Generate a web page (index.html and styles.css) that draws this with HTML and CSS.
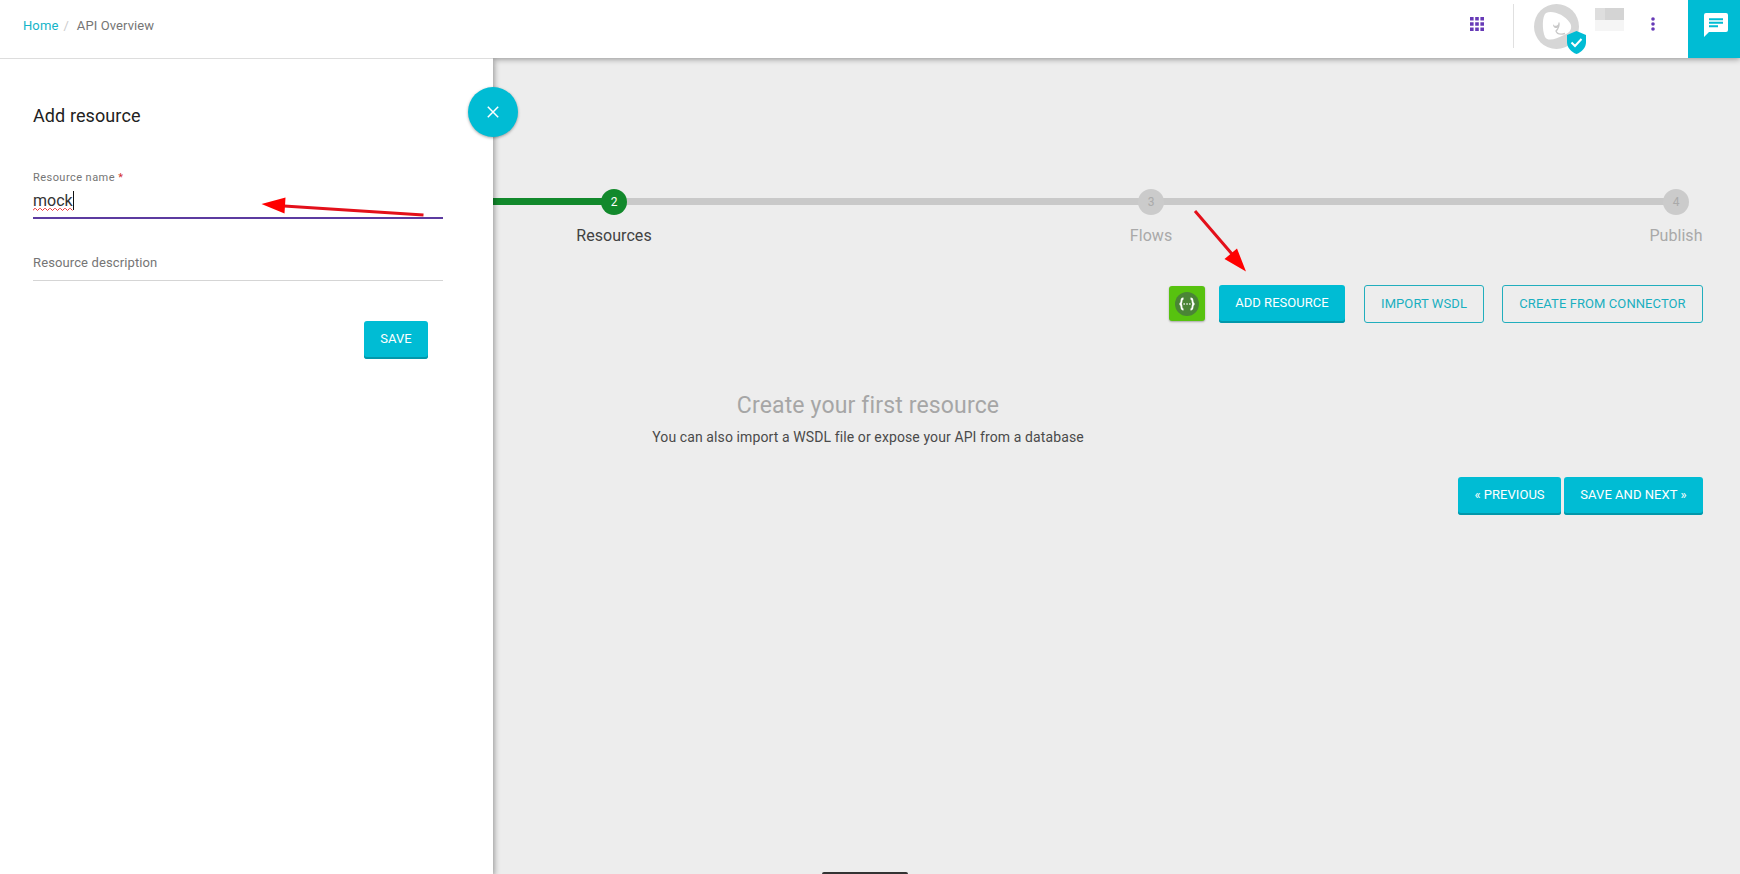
FILE: index.html
```html
<!DOCTYPE html>
<html lang="en">
<head>
<meta charset="utf-8">
<title>API Overview</title>
<link rel="stylesheet" href="styles.css">
</head>
<body>
<header class="topbar">
  <nav class="crumbs"><a class="home">Home</a><span class="slash">/</span><span class="current">API Overview</span></nav>
  <div class="tools">
    <svg class="apps" width="14" height="14" viewBox="0 0 14 14" fill="#673ab7"><path d="M0 0h3.6v3.6H0zM5.2 0h3.6v3.6H5.2zM10.4 0H14v3.6h-3.6zM0 5.2h3.6v3.6H0zM5.2 5.2h3.6v3.6H5.2zM10.4 5.2H14v3.6h-3.6zM0 10.4h3.6V14H0zM5.2 10.4h3.6V14H5.2zM10.4 10.4H14V14h-3.6z"/></svg>
    <span class="divider"></span>
    <div class="avatar">
      <svg width="45" height="45" viewBox="0 0 45 45"><circle cx="22.5" cy="22.5" r="22.5" fill="#d6d6d6"/><path d="M12 9C18 6 30 10 36 19C39 24 36 29 30 31C22 35 14 38 11 33C8 26 8 12 12 9Z" fill="#fff"/><path d="M25 18.500c.5 4-1.500 7-3 8.500c1 3 5 3.500 9 2.500" fill="none" stroke="#cacaca" stroke-width="1.300"/><path d="M19 20c1 2.500 4 2.500 6-.5c.5 4-1.500 5-3.500 4.500s-2.500-2-2.500-4Z" fill="#c8c8c8"/></svg>
      <svg class="badge" width="19" height="23" viewBox="0 0 19 23"><path d="M9.500 0L19 4v7c0 5.500-4 10-9.500 12C4 21 0 16.500 0 11V4Z" fill="#00bcd4"/><path d="M4.500 11.500l3.500 3.500 6.500-7" fill="none" stroke="#fff" stroke-width="2"/></svg>
    </div>
    <div class="masked"><i></i><i></i><i></i><i></i></div>
    <svg class="more" width="4" height="14" viewBox="0 0 4 14" fill="#673ab7"><circle cx="2" cy="2" r="1.8"/><circle cx="2" cy="7" r="1.8"/><circle cx="2" cy="12" r="1.8"/></svg>
    <div class="chat"><svg width="24" height="24" viewBox="0 0 24 24"><path d="M2 0h20a2 2 0 0 1 2 2v15a2 2 0 0 1-2 2H5l-5 5V2a2 2 0 0 1 2-2Z" fill="#fff"/><path d="M5 6.200h14M5 9.700h14M5 13.200h9" stroke="#00bcd4" stroke-width="1.900"/></svg></div>
  </div>
</header>
<main class="content">
  <div class="steps">
    <div class="step"><span class="dot done"></span></div>
    <div class="step"><span class="dot done">2</span><span class="name on">Resources</span></div>
    <div class="step"><span class="dot">3</span><span class="name">Flows</span></div>
    <div class="step"><span class="dot">4</span><span class="name">Publish</span></div>
  </div>
  <div class="actions">
    <span class="swagger"><svg width="24" height="24" viewBox="0 0 24 24"><circle cx="12" cy="12" r="12" fill="#4a8536"/><path d="M8.500 6.500C6.500 6.500 6.500 7.500 6.500 9S6.500 12 4.500 12C6.500 12 6.500 13.500 6.500 15s0 2.500 2 2.500M15.500 6.500c2 0 2 1 2 2.500s0 3 2 3c-2 0-2 1.500-2 3s0 2.500-2 2.500" fill="none" stroke="#fff" stroke-width="1.800"/><path d="M8.500 12h1.300M11.400 12h1.300M14.200 12h1.300" stroke="#fff" stroke-width="1.300"/></svg></span>
    <button class="btn add">ADD RESOURCE</button>
    <button class="btn outline import">IMPORT WSDL</button>
    <button class="btn outline connector">CREATE FROM CONNECTOR</button>
  </div>
  <section class="empty">
    <h2>Create your first resource</h2>
    <p>You can also import a WSDL file or expose your API from a database</p>
  </section>
  <div class="pager"><button class="btn prev">« PREVIOUS</button><button class="btn next">SAVE AND NEXT »</button></div>
</main>
<aside class="drawer">
  <h1>Add resource</h1>
  <div class="field active"><label>Resource name <b>*</b></label><div class="value"><span class="typed">mock<svg class="squiggle" width="40" height="3" viewBox="0 0 40 3"><path d="M0 2.500L1.500 .5H2.500L4.500 2.500L6.500 .5H7.500L9.500 2.500L11.500 .5H12.500L14.500 2.500L16.500 .5H17.500L19.500 2.500L21.500 .5H22.500L24.500 2.500L26.500 .5H27.500L29.500 2.500L31.500 .5H32.500L34.500 2.500L36.500 .5H37.500L39.500 2.500" fill="none" stroke="#e33" stroke-width="1"/></svg></span><span class="caret"></span></div></div>
  <div class="field desc">Resource description</div>
  <button class="btn save">SAVE</button>
  <button class="close" aria-label="Close"><svg width="12" height="12" viewBox="0 0 12 12"><path d="M.8.8l10.400 10.400M11.200.8L.8 11.200" stroke="#fff" stroke-width="1.500"/></svg></button>
</aside>
<svg class="arrows" width="1740" height="874" viewBox="0 0 1740 874"><path d="M423.500 215L284 206M1195 211L1232 254" stroke="#e3101a" stroke-width="3"/><path d="M261.500 204L285.500 197.500L284.500 213.500ZM1246 271.500L1237 248.500L1224.500 259Z" fill="#f00"/></svg>
<div class="handle"></div>
</body>
</html>
```

FILE: styles.css
```css
* { box-sizing: border-box; }
body { margin: 0; height: 874px; overflow: hidden; position: relative; display: flex; flex-direction: column; background: #ededed; font-family: Roboto, sans-serif; color: #212121; }
h1, h2, p { margin: 0; font-weight: 400; }
.topbar { position: relative; z-index: 1; flex: none; height: 58px; display: flex; justify-content: space-between; background: #fff; box-shadow: 0 1px 6px rgba(0,0,0,.4); }
.crumbs { display: flex; padding: 17px 0 0 23px; font-size: 13px; line-height: 18px; letter-spacing: .1px; }
.home { color: #15b4c8; }
.slash { margin: 0 8px 0 5px; color: #ccc; }
.current { color: #757575; }
.tools { display: flex; align-items: flex-start; }
.apps { margin-top: 17px; }
.divider { width: 1px; height: 44px; margin: 4px 20px 0 29px; background: #e0e0e0; }
.avatar { position: relative; width: 45px; height: 45px; margin-top: 4px; }
.badge { position: absolute; left: 33px; top: 27px; }
.masked { display: grid; grid-template-columns: 10px 19px; grid-template-rows: 12px 11px; margin: 8px 27px 0 16px; }
.masked i { background: #d4d4d4; }
.masked i:first-child { background: #dedede; }
.masked i:nth-child(n+3) { background: #f5f5f5; }
.more { margin: 17px 33px 0 0; }
.chat { width: 52px; height: 58px; padding: 13px 0 0 16px; background: #00bcd4; }
.content { flex: 1; padding: 130px 37px 0 33px; }
.steps { position: relative; display: flex; width: 1670px; }
.steps::before, .steps::after { content: ""; position: absolute; top: 10px; height: 7px; }
.steps::before { left: 27px; right: 27px; background: #c9c9c9; }
.steps::after { left: 27px; width: 554px; background: #12892c; }
.step { position: relative; z-index: 1; width: 54px; display: flex; flex-direction: column; align-items: center; }
.step:nth-child(2) { margin-left: 500px; }
.step:nth-child(3) { margin-left: 483px; }
.step:nth-child(4) { margin-left: 471px; }
.dot { width: 26px; height: 26px; margin-top: 1px; border-radius: 50%; background: #cbcbcb; color: #aaa; font-size: 12px; line-height: 26px; text-align: center; }
.dot.done { background: #12892c; color: #fff; }
.name { margin-top: 11px; font-size: 16px; line-height: 20px; white-space: nowrap; color: #a9a9a9; letter-spacing: .05px; }
.name.on { color: #424242; }
.actions { display: flex; margin-top: 39px; justify-content: flex-end; }
.btn { height: 38px; padding: 0 0 3px; border: 0; border-radius: 3px; background: #00bcd4; box-shadow: inset 0 -2px #0297aa; color: #fff; font: 13px/34px Roboto, sans-serif; letter-spacing: .04px; text-align: center; white-space: nowrap; }
.outline { padding: 0; border: 1px solid #21aebd; background: transparent; box-shadow: none; color: #19afc0; letter-spacing: .08px; }
.swagger { width: 36px; height: 35px; margin: 1px 14px 0 0; display: grid; place-items: center; border-radius: 3px; background: #57c20f; box-shadow: 0 1px 2px rgba(0,0,0,.3); }
.add { width: 126px; margin-right: 19px; }
.import { width: 120px; margin-right: 18px; }
.connector { width: 201px; }
.empty { margin-top: 67px; text-align: center; }
.empty h2 { font-size: 23px; line-height: 32px; letter-spacing: .15px; color: #a6a6a6; }
.empty p { margin-top: 5px; font-size: 14px; line-height: 20px; letter-spacing: .105px; color: #4a4a4a; }
.pager { display: flex; justify-content: flex-end; gap: 3px; margin-top: 30px; }
.prev { width: 103px; }
.next { width: 139px; }
.drawer { position: absolute; z-index: 2; left: 0; top: 58px; bottom: 0; width: 493px; padding: 45px 50px 0 33px; border-top: 1px solid #ddd; background: #fff; box-shadow: 1px 2px 6px rgba(0,0,0,.4); clip-path: inset(0 -60px 0 0); }
.drawer h1 { font-size: 18px; line-height: 24px; letter-spacing: .1px; }
.field label { display: block; font-size: 11px; line-height: 16px; color: #757575; letter-spacing: .45px; }
.field b { color: #d32f2f; font-weight: 400; }
.active { height: 49px; margin-top: 42px; border-bottom: 2px solid #5c3ba0; }
.value { display: flex; padding-top: 4px; font-size: 16px; line-height: 22px; color: #333; }
.typed { position: relative; }
.squiggle { position: absolute; left: 0; bottom: 1px; }
.caret { width: 1px; height: 19px; margin-top: 1px; background: #111; }
.desc { height: 39px; margin-top: 23px; padding-top: 11px; border-bottom: 1px solid #d5d5d5; font-size: 13px; line-height: 20px; color: #757575; letter-spacing: .12px; }
.save { display: block; width: 64px; margin: 40px 0 0 331px; }
.close { position: absolute; left: 468px; top: 28px; width: 50px; height: 50px; padding: 0; display: grid; place-items: center; border: 0; border-radius: 50%; background: #00bcd4; box-shadow: 0 1px 3px rgba(0,0,0,.35); }
.arrows { position: absolute; z-index: 3; left: 0; top: 0; pointer-events: none; }
.handle { position: absolute; left: 822px; bottom: 0; width: 86px; height: 2px; border-radius: 3px 3px 0 0; background: #333; }
```
